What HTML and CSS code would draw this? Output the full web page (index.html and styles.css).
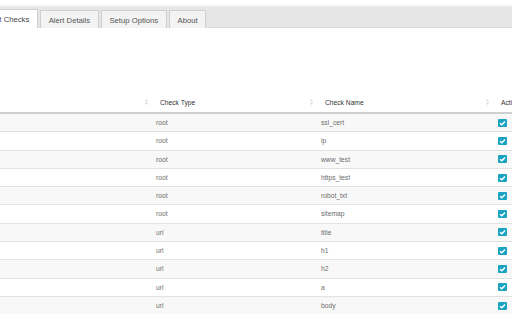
FILE: index.html
```html
<!DOCTYPE html>
<html lang="en">
<head>
  <meta charset="UTF-8">
  <title>Alert Checks</title>
  <link rel="stylesheet" href="styles.css">
</head>
<body>
  <div class="viewport">
    <div class="page">
      <!-- tabs -->
      <div class="top-line"></div>
      <div class="tab-bar">
        <div class="tab active">Alert Checks</div>
        <div class="tab">Alert Details</div>
        <div class="tab">Setup Options</div>
        <div class="tab">About</div>
      </div>

      <!-- checks table -->
      <table class="checks">
        <colgroup>
          <col class="c-id">
          <col class="c-type">
          <col class="c-name">
          <col class="c-active">
        </colgroup>
        <thead>
          <tr>
            <th><svg class="sort" viewBox="0 0 4 8"><path d="M2 0 L4 3 L0 3 Z M2 8 L4 5 L0 5 Z"/></svg></th>
            <th>Check Type<svg class="sort" viewBox="0 0 4 8"><path d="M2 0 L4 3 L0 3 Z M2 8 L4 5 L0 5 Z"/></svg></th>
            <th>Check Name<svg class="sort" viewBox="0 0 4 8"><path d="M2 0 L4 3 L0 3 Z M2 8 L4 5 L0 5 Z"/></svg></th>
            <th class="th-active">Acti</th>
          </tr>
        </thead>
        <tbody id="rows"></tbody>
      </table>
    </div>
  </div>

  <script>
    const checks = [
      ['root', 'ssl_cert'],
      ['root', 'ip'],
      ['root', 'www_test'],
      ['root', 'https_test'],
      ['root', 'robot_txt'],
      ['root', 'sitemap'],
      ['url', 'title'],
      ['url', 'h1'],
      ['url', 'h2'],
      ['url', 'a'],
      ['url', 'body']
    ];

    const tbody = document.getElementById('rows');
    const box = '<svg class="check" viewBox="0 0 9 8"><rect width="9" height="8" rx="1"/><path d="M2 4.2 L3.8 5.8 L7 2.4" /></svg>';

    checks.forEach(([type, name]) => {
      const tr = document.createElement('tr');
      tr.innerHTML = `<td></td><td>${type}</td><td>${name}</td><td>${box}</td>`;
      tbody.appendChild(tr);
    });
  </script>
</body>
</html>
```

FILE: styles.css
```css
body {
  margin: 0;
  background: #fff;
  font-family: 'Liberation Sans', Arial, sans-serif;
}

.viewport {
  width: 512px;
  height: 320px;
  overflow: hidden;
}

.page {
  margin-left: -23px;
  width: 540px;
  padding-top: 5px;
}

.top-line {
  height: 2px;
  background: #f2f2f2;
}

.tab-bar {
  display: flex;
  align-items: flex-end;
  gap: 2px;
  height: 21px;
  background: #e6e6e6;
  border-bottom: 1px solid #dcdcdc;
  box-sizing: border-box;
}

.tab {
  height: 18px;
  line-height: 19px;
  padding: 0 7.7px;
  font-size: 7.7px;
  color: #555;
  background: #f3f3f3;
  border: 1px solid #cfcfcf;
  border-bottom: none;
  box-sizing: border-box;
  margin-bottom: -1px;
}

.tab.active {
  background: #fff;
  color: #444;
  height: 19px;
}

.checks {
  margin-top: 65px;
  border-collapse: collapse;
  table-layout: fixed;
  width: 540px;
  font-size: 6.7px;
}

.c-id { width: 174px; }
.c-type { width: 165px; }
.c-name { width: 176px; }
.c-active { width: 25px; }

.checks th {
  position: relative;
  text-align: left;
  font-weight: normal;
  color: #333;
  height: 19px;
  padding: 0 5px 0 9px;
  border-bottom: 2px solid #cfcfcf;
  white-space: nowrap;
  overflow: hidden;
}

.sort {
  position: absolute;
  right: 3px;
  top: 6px;
  width: 3px;
  height: 6px;
  fill: #d6d6d6;
}

.checks td {
  color: #6b6b6b;
  line-height: 17.3px;
  padding: 0 5px;
  border-top: 1px solid #e2e2e2;
  white-space: nowrap;
}

.checks tbody tr:nth-child(odd) {
  background: #f8f8f8;
}

.checks tbody tr:first-child td {
  border-top: none;
}

.check {
  display: block;
  width: 9px;
  height: 8px;
  margin-left: 1px;
}

.check rect {
  fill: #1ba4c2;
}

.check path {
  fill: none;
  stroke: #fff;
  stroke-width: 1.4;
}
```
